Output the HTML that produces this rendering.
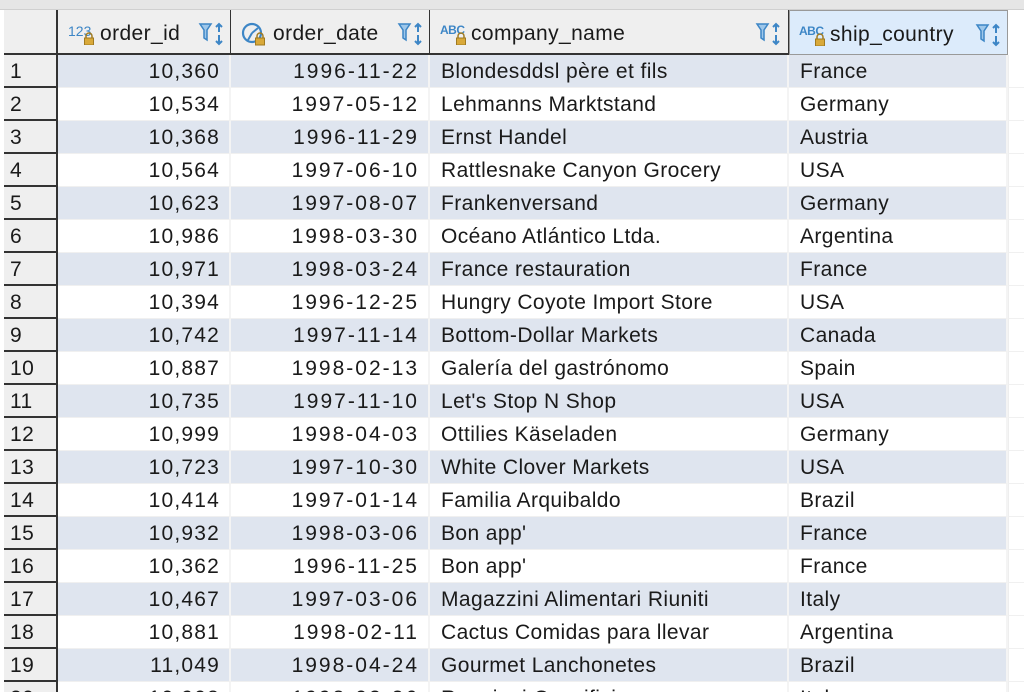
<!DOCTYPE html><html><head><meta charset="utf-8"><style>
*{margin:0;padding:0;box-sizing:border-box}
html,body{width:1024px;height:692px;overflow:hidden}
body{background:#fff;font-family:"Liberation Sans",Arial,sans-serif;color:#1a1a1a;position:relative}
.top{position:absolute;left:0;top:0;width:1024px;height:10px;background:#e6e6e6;border-bottom:1px solid #d0d0d0}
.hdr{position:absolute;top:10px;height:45px;background:#efefef;border-right:1px solid #333;border-bottom:2px solid #333;font-size:21px;letter-spacing:0.4px;line-height:47px}
.hdr .t{position:absolute;top:0}
.row{position:absolute;left:0;width:1024px;height:33px}
.rn{position:absolute;left:4px;width:54px;height:33px;background:#efefef;border-bottom:2px solid #333;border-right:2px solid #333;font-size:21px;line-height:34px;padding-left:6px;letter-spacing:0.4px}
.c{position:absolute;top:0;height:33px;font-size:21px;letter-spacing:0.4px;line-height:34px;border-right:2px solid #f4f4f4;border-bottom:1px solid #f0f0f0;white-space:nowrap;overflow:hidden}
.r{text-align:right;padding-right:9px}
.id{letter-spacing:1.2px}
.dt{letter-spacing:2px}
.l{padding-left:11px}
.alt .c{background:#dfe5ef}
.alt .c.e{background:#fff}
svg{position:absolute}
</style></head><body>
<div class="top"></div>
<div class="hdr" style="left:4px;width:54px;border-right:2px solid #333"></div>
<div class="hdr" style="left:58px;width:173px">
 <span style="position:absolute;left:10px;top:-2px;font-size:14px;color:#3d86c6;letter-spacing:0">123</span>
 <svg style="left:25px;top:22px" width="12" height="13"><path d="M3 6V4a3 3 0 0 1 6 0v2" fill="none" stroke="#a07a20" stroke-width="1.5"/><rect x="1.5" y="6" width="9" height="7" fill="#d9a93a" stroke="#a07a20"/></svg>
 <span class="t" style="left:42px">order_id</span>
 <svg style="left:140px;top:12px" width="30" height="24"><path d="M2 2h11l-4 6v10l-3-2V8z" fill="#9ec7ea" stroke="#3d86c6" stroke-width="1.5"/><path d="M21 2v8M18 5l3-3 3 3M21 13v9M18 19l3 3 3-3" fill="none" stroke="#3d86c6" stroke-width="2"/></svg>
</div>
<div class="hdr" style="left:231px;width:199px">
 <svg style="left:10px;top:12px" width="30" height="24"><circle cx="11" cy="11" r="9" fill="none" stroke="#3d86c6" stroke-width="2.2"/><path d="M11 11l6-5M11 11l-4 7" stroke="#3d86c6" stroke-width="2"/><path d="M16 16v-2a3 3 0 0 1 6 0v2" fill="none" stroke="#a07a20" stroke-width="1.5"/><rect x="14.5" y="16" width="9" height="7" fill="#d9a93a" stroke="#a07a20"/></svg>
 <span class="t" style="left:42px">order_date</span>
 <svg style="left:166px;top:12px" width="30" height="24"><path d="M2 2h11l-4 6v10l-3-2V8z" fill="#9ec7ea" stroke="#3d86c6" stroke-width="1.5"/><path d="M21 2v8M18 5l3-3 3 3M21 13v9M18 19l3 3 3-3" fill="none" stroke="#3d86c6" stroke-width="2"/></svg>
</div>
<div class="hdr" style="left:430px;width:359px">
 <span style="position:absolute;left:10px;top:-3px;font-size:12px;font-weight:bold;color:#3d86c6;letter-spacing:-0.5px">ABC</span>
 <svg style="left:25px;top:22px" width="12" height="13"><path d="M3 6V4a3 3 0 0 1 6 0v2" fill="none" stroke="#a07a20" stroke-width="1.5"/><rect x="1.5" y="6" width="9" height="7" fill="#d9a93a" stroke="#a07a20"/></svg>
 <span class="t" style="left:41px">company_name</span>
 <svg style="left:325px;top:12px" width="30" height="24"><path d="M2 2h11l-4 6v10l-3-2V8z" fill="#9ec7ea" stroke="#3d86c6" stroke-width="1.5"/><path d="M21 2v8M18 5l3-3 3 3M21 13v9M18 19l3 3 3-3" fill="none" stroke="#3d86c6" stroke-width="2"/></svg>
</div>
<div class="hdr" style="left:789px;width:219px;background:#dcebfb;border:1px solid #999;border-bottom:1px solid #999">
 <span style="position:absolute;left:9px;top:-3px;font-size:12px;font-weight:bold;color:#3d86c6;letter-spacing:-0.5px">ABC</span>
 <svg style="left:24px;top:22px" width="12" height="13"><path d="M3 6V4a3 3 0 0 1 6 0v2" fill="none" stroke="#a07a20" stroke-width="1.5"/><rect x="1.5" y="6" width="9" height="7" fill="#d9a93a" stroke="#a07a20"/></svg>
 <span class="t" style="left:40px">ship_country</span>
 <svg style="left:185px;top:12px" width="30" height="24"><path d="M2 2h11l-4 6v10l-3-2V8z" fill="#9ec7ea" stroke="#3d86c6" stroke-width="1.5"/><path d="M21 2v8M18 5l3-3 3 3M21 13v9M18 19l3 3 3-3" fill="none" stroke="#3d86c6" stroke-width="2"/></svg>
</div>
<div class="hdr" style="left:1008px;width:16px;background:#fff;border:none"></div>
<div id="rows"></div>
<script>
const d=[["10,360","1996-11-22","Blondesddsl père et fils","France"],["10,534","1997-05-12","Lehmanns Marktstand","Germany"],["10,368","1996-11-29","Ernst Handel","Austria"],["10,564","1997-06-10","Rattlesnake Canyon Grocery","USA"],["10,623","1997-08-07","Frankenversand","Germany"],["10,986","1998-03-30","Océano Atlántico Ltda.","Argentina"],["10,971","1998-03-24","France restauration","France"],["10,394","1996-12-25","Hungry Coyote Import Store","USA"],["10,742","1997-11-14","Bottom-Dollar Markets","Canada"],["10,887","1998-02-13","Galería del gastrónomo","Spain"],["10,735","1997-11-10","Let's Stop N Shop","USA"],["10,999","1998-04-03","Ottilies Käseladen","Germany"],["10,723","1997-10-30","White Clover Markets","USA"],["10,414","1997-01-14","Familia Arquibaldo","Brazil"],["10,932","1998-03-06","Bon app'","France"],["10,362","1996-11-25","Bon app'","France"],["10,467","1997-03-06","Magazzini Alimentari Riuniti","Italy"],["10,881","1998-02-11","Cactus Comidas para llevar","Argentina"],["11,049","1998-04-24","Gourmet Lanchonetes","Brazil"],["10,908","1998-02-26","Reggiani Caseifici","Italy"]];
let h="";d.forEach((r,i)=>{h+=`<div class="row${i%2==0?' alt':''}" style="top:${55+33*i}px"><div class="rn">${i+1}</div><div class="c r id" style="left:58px;width:173px">${r[0]}</div><div class="c r dt" style="left:231px;width:199px">${r[1]}</div><div class="c l" style="left:430px;width:359px">${r[2]}</div><div class="c l" style="left:789px;width:219px">${r[3]}</div><div class="c e" style="left:1008px;width:16px;border-right:none;border-left:1px solid #eee"></div></div>`});
document.getElementById("rows").innerHTML=h;
</script>
</body></html>
